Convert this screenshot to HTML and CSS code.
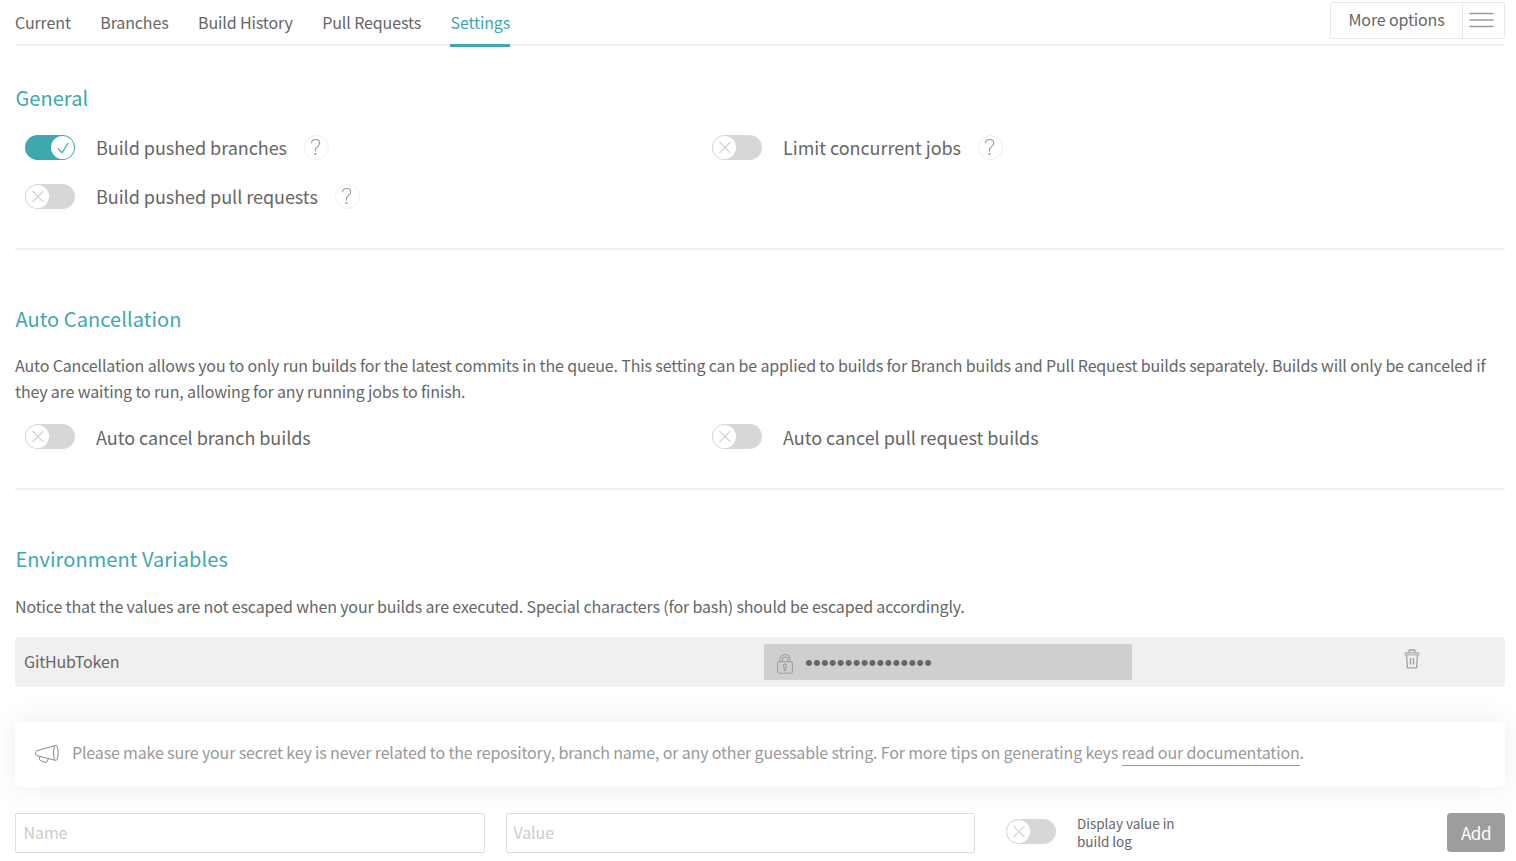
FILE: index.html
```html
<!DOCTYPE html>
<html lang="en">
<head>
<meta charset="utf-8">
<title>Settings</title>
<link rel="stylesheet" href="styles.css">
</head>
<body>
<svg class="defs" width="0" height="0" aria-hidden="true">
  <symbol id="help" viewBox="0 0 25 25"><circle cx="12.500" cy="12.500" r="12" fill="none" stroke="#eee"/><path d="M7.500 8.200C7.600 5.700 9.300 4.500 11.600 4.500c2.400 0 4.100 1.300 4.100 3.500 0 3.600-4.300 3.500-4.300 6.800v1.800" fill="none" stroke="#999" stroke-width="1.100"/><circle cx="11.400" cy="19" r="1.100" fill="#999"/></symbol>
  <symbol id="cross" viewBox="0 0 23 23"><path d="M6 6l11 11M17 6L6 17" fill="none" stroke="#d5d5d5" stroke-width="1.200"/></symbol>
  <symbol id="check" viewBox="0 0 23 23"><path d="M6.500 12.300l4 4.400 6.300-9.700" fill="none" stroke="#3fa7ae" stroke-width="1.200"/></symbol>
</svg>
<main class="page">
  <nav class="nav">
    <ul class="tabs">
      <li class="tab">Current</li>
      <li class="tab">Branches</li>
      <li class="tab">Build History</li>
      <li class="tab">Pull Requests</li>
      <li class="tab active">Settings</li>
    </ul>
    <div class="more"><span class="more-label">More options</span><span class="more-icon"><svg width="25" height="16" viewBox="0 0 25 16"><path d="M.5 1.500h24M.5 8h24M.5 14.500h24" stroke="#999" stroke-width="1.500"/></svg></span></div>
  </nav>

  <section class="section first">
    <h2 class="title">General</h2>
    <div class="options">
      <div class="option"><span class="switch on"><svg class="knob"><use href="#check"/></svg></span><span class="label">Build pushed branches</span><svg class="help"><use href="#help"/></svg></div>
      <div class="option"><span class="switch"><svg class="knob"><use href="#cross"/></svg></span><span class="label">Limit concurrent jobs</span><svg class="help"><use href="#help"/></svg></div>
      <div class="option"><span class="switch"><svg class="knob"><use href="#cross"/></svg></span><span class="label">Build pushed pull requests</span><svg class="help"><use href="#help"/></svg></div>
    </div>
  </section>

  <section class="section">
    <h2 class="title">Auto Cancellation</h2>
    <p class="text auto">Auto Cancellation allows you to only run builds for the latest commits in the queue. This setting can be applied to builds for Branch builds and Pull Request builds separately. Builds will only be canceled if<br>they are waiting to run, allowing for any running jobs to finish.</p>
    <div class="options">
      <div class="option"><span class="switch"><svg class="knob"><use href="#cross"/></svg></span><span class="label">Auto cancel branch builds</span></div>
      <div class="option"><span class="switch"><svg class="knob"><use href="#cross"/></svg></span><span class="label">Auto cancel pull request builds</span></div>
    </div>
  </section>

  <section class="section last">
    <h2 class="title">Environment Variables</h2>
    <p class="text">Notice that the values are not escaped when your builds are executed. Special characters (for bash) should be escaped accordingly.</p>
    <div class="variable">
      <span class="variable-name">GitHubToken</span>
      <span class="secret">
        <svg width="16" height="20" viewBox="0 0 16 20" fill="none" stroke="#a0a0a0" stroke-width="1.150"><rect x=".6" y="7.600" width="14.800" height="11.600" rx="1.800"/><path d="M3 7.500V5.500a5 5 0 0 1 10 0v2M5.400 7.500V5.600a2.600 2.600 0 0 1 5.200 0v1.900"/><path d="M8 10.200a1.600 1.600 0 0 1 .8 3v2.600a.8.8 0 0 1-1.600 0v-2.600a1.600 1.600 0 0 1 .8-3z"/></svg>
        <span class="dots">••••••••••••••••</span>
      </span>
      <svg class="trash" width="16" height="20" viewBox="0 0 16 20" fill="none" stroke="#a0a0a0"><path d="M5 3.500V1.800Q5 1 5.800 1h4.400q.8 0 .8 .8v1.700" stroke-width="1.300"/><path d="M1 3.500h14v2.500H1z" fill="#ccc" stroke="#b0b0b0" stroke-width=".8"/><path d="M2.600 6l.8 12.800h9.200L13.400 6" stroke-width="1.300"/><path d="M6.500 9v6.500M9.500 9v6.500" stroke-width="1.400"/></svg>
    </div>
    <div class="notice">
      <svg class="horn" width="24" height="20" viewBox="0 0 24 20" fill="none" stroke="#888" stroke-width="1"><path d="M20.300 1.500L1.600 6.800Q.7 7.200.7 8.200v2q0 1 .9 1.300l18.700 4.800"/><ellipse cx="20.800" cy="8.900" rx="2.300" ry="7.600"/><path d="M4.800 12.400l-.3 3q0 .9.900 1.200l5 1.700q1 .3 1.500-.6l1.500-3"/></svg>
      <span class="notice-text">Please make sure your secret key is never related to the repository, branch name, or any other guessable string. For more tips on generating keys <a class="link">read our documentation</a>.</span>
    </div>
    <form class="form">
      <input class="input" type="text" placeholder="Name">
      <input class="input" type="text" placeholder="Value">
      <span class="switch"><svg class="knob"><use href="#cross"/></svg></span>
      <span class="small">Display value in<br>build log</span>
      <button class="add" type="button">Add</button>
    </form>
  </section>
</main>
</body>
</html>
```
FILE: styles.css
```css
* { box-sizing: border-box; }
body {
  margin: 0;
  height: 861px;
  overflow: hidden;
  background: #fff;
  color: #666;
  font-family: "Noto Sans CJK SC", "Open Sans", sans-serif;
  font-size: 16px;
  letter-spacing: -.149px;
}
h2, p, ul { margin: 0; padding: 0; font-weight: 400; }
svg { display: block; flex: none; }
.defs { position: absolute; }
.page { padding: 0 11px 0 15px; }

.nav {
  display: flex;
  justify-content: space-between;
  align-items: flex-start;
  height: 46px;
  border-bottom: 2px solid #f1f1f1;
}
.tabs { display: flex; gap: 29.45px; list-style: none; letter-spacing: -.12px; }
.tab { height: 47px; line-height: 45px; white-space: nowrap; }
.active { min-width: 60px; color: #3fa7ae; border-bottom: 3px solid #3fa7ae; }
.more {
  display: flex;
  width: 175px;
  height: 37px;
  margin-top: 2px;
  border: 1px solid #e8e8e8;
  border-radius: 2px;
}
.more-label { width: 132px; padding-left: 17.5px; line-height: 32px; border-right: 1px solid #e8e8e8; white-space: nowrap; }
.more-icon { display: flex; padding: 9px 0 0 6px; }

.section { padding: 54px 0 27px; border-bottom: 2px solid #f1f1f1; }
.first { padding-top: 37px; }
.last { padding-bottom: 0; border: 0; }
.title { padding-left: .4px; color: #3fa7ae; font-size: 20px; line-height: 30px; letter-spacing: .08px; }
.options { display: grid; grid-template-columns: 687px 1fr; padding: 0 10px; }
.first .options { margin-top: 10px; }
.option { display: flex; align-items: center; height: 49px; }
.switch { flex: none; width: 50px; height: 25px; padding: 1px; border-radius: 13px; background: #d7d7d7; }
.on { background: #3fa7ae; }
.knob { width: 23px; height: 23px; border-radius: 50%; background: #fff; }
.on .knob { margin-left: 25px; }
.knob use { transform: translateX(.5px); }
.label { margin-left: 21px; font-size: 18px; line-height: 26px; letter-spacing: -.04px; white-space: nowrap; }
.first .label { padding-bottom: 2px; }
.help { width: 25px; height: 25px; margin-left: 17px; }

.text { margin-top: 18px; line-height: 26px; white-space: nowrap; }
.auto { margin-bottom: 8px; }
.last .text { margin-top: 19px; }
.variable {
  display: flex;
  align-items: center;
  height: 50px;
  margin-top: 18px;
  padding-left: 9px;
  border-radius: 3px;
  background: #f0f0f0;
}
.variable-name { width: 740px; padding-bottom: 2px; }
.secret {
  display: flex;
  align-items: center;
  gap: 12px;
  width: 368px;
  height: 36px;
  padding: 3px 0 0 13px;
  border-radius: 2px;
  background: #cfcfcf;
}
.dots { padding-bottom: 2px; font: 22px/30px "Liberation Sans", sans-serif; letter-spacing: .25px; }
.trash { margin: -6px 0 0 272px; }

.notice {
  display: flex;
  align-items: center;
  gap: 13px;
  height: 65px;
  margin-top: 35px;
  padding-left: 20px;
  background: #fff;
  box-shadow: 0 0 30px rgba(0, 0, 0, .08);
  color: #999;
}
.horn { margin-bottom: 1px; }
.notice-text { padding-bottom: 4px; line-height: 26px; letter-spacing: -.16px; white-space: nowrap; }
.link { display: inline-block; padding-bottom: 1px; line-height: 24px; border-bottom: 1px solid #999; }
.form { display: flex; align-items: flex-start; margin-top: 26px; }
.input {
  width: 470px;
  height: 40px;
  margin-right: 21px;
  padding: 0 7.5px 2px;
  border: 1px solid #ddd;
  border-radius: 2px;
  background: #fff;
  color: #666;
  font: inherit;
  letter-spacing: -.1px;
}
.input + .input { width: 469px; margin-right: 31px; padding-left: 6.5px; }
.input::placeholder { color: #ccc; opacity: 1; }
.form .switch { margin-top: 6px; }
.small { margin: 1px 0 0 21px; font-size: 13.500px; line-height: 18px; letter-spacing: -.03px; white-space: nowrap; }
.add {
  width: 58px;
  height: 39px;
  margin-left: auto;
  padding: 0;
  border: 0;
  border-radius: 4px;
  background: #9d9d9d;
  color: #fff;
  font-family: inherit;
  font-size: 17px;
  letter-spacing: -.4px;
}
```
